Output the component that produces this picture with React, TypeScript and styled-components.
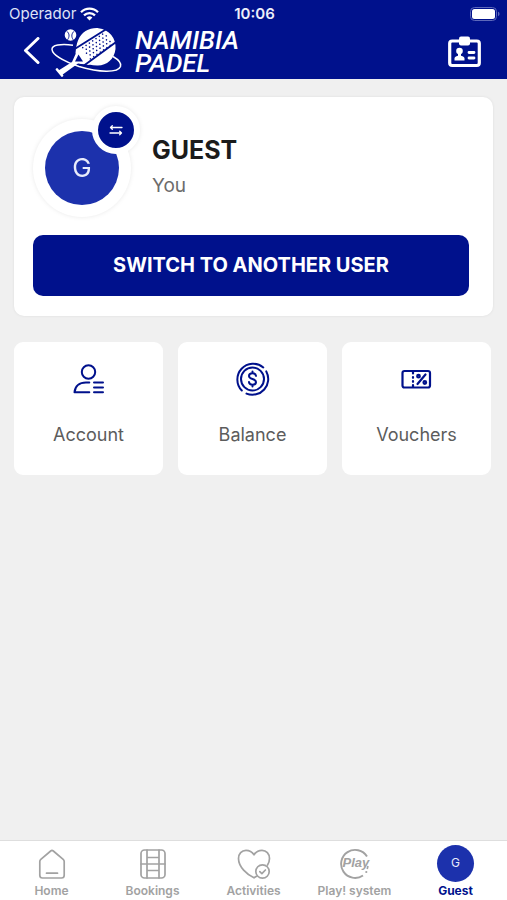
import React from "react";
import styled, { createGlobalStyle } from "styled-components";

const navy = "#00118c";
const royal = "#1c31ac";
const grey = "#a2a2a2";

const GlobalStyle = createGlobalStyle`
  *, *::before, *::after { box-sizing: border-box; }
  body { margin: 0; background: #f0f0f0; font-family: Inter, "Liberation Sans", sans-serif; }
  button { font: inherit; border: 0; padding: 0; cursor: pointer; }
  svg { display: block; flex: none; }
`;

const Screen = styled.div`
  min-height: 100vh;
  display: flex;
  flex-direction: column;
`;

const Header = styled.header`
  background: ${navy};
  color: #fff;
  padding-bottom: 2px;
`;

const StatusBar = styled.div`
  height: 27px;
  padding: 0 7px 0 9px;
  display: grid;
  grid-template-columns: 1fr auto 1fr;
  align-items: center;
`;

const Carrier = styled.span`
  display: flex;
  align-items: center;
  gap: 4px;
  font-size: 15px;
  line-height: 18px;
  color: #dfe2f6;
`;

const Clock = styled.time`
  font-size: 15px;
  line-height: 18px;
  font-weight: 600;
  color: #eceefa;
`;

const BatterySlot = styled.span`
  justify-self: end;
`;

const TitleBar = styled.div`
  height: 50px;
  padding: 0 26px 0 23px;
  display: flex;
  align-items: center;
`;

const IconButton = styled.button`
  background: none;
  color: inherit;
  display: flex;
`;

const Brand = styled.div`
  flex: 1;
  display: flex;
  align-items: center;
  gap: 12px;
  margin-left: 9px;
`;

const BrandName = styled.span`
  font-family: Roboto, "Liberation Sans", sans-serif;
  font-size: 26px;
  line-height: 23px;
  font-style: italic;
  font-weight: 500;
`;

const Main = styled.main`
  flex: 1;
  padding: 18px 14px;
  display: flex;
  flex-direction: column;
  gap: 26px;
`;

const ProfileCard = styled.section`
  background: #fff;
  border-radius: 10px;
  padding: 22px 24px 20px 19px;
  box-shadow: 0 0 3px rgba(0, 0, 0, 0.08);
`;

const Identity = styled.div`
  display: flex;
  align-items: center;
  gap: 21px;
  margin-bottom: 18px;
`;

const AvatarFrame = styled.div`
  position: relative;
  width: 98px;
  height: 98px;
  border-radius: 50%;
  background: #fff;
  display: grid;
  place-items: center;
  filter: drop-shadow(0 0 2px rgba(0, 0, 0, 0.09));
`;

const Avatar = styled.span<{ $size: number; $font: number }>`
  width: ${(p) => p.$size}px;
  height: ${(p) => p.$size}px;
  padding-bottom: 2px;
  border-radius: 50%;
  background: ${royal};
  color: #e8ebfb;
  display: grid;
  place-items: center;
  font-size: ${(p) => p.$font}px;
  font-weight: 400;
`;

const SwapBadge = styled.button`
  position: absolute;
  top: -13px;
  right: -9px;
  width: 48px;
  height: 48px;
  border-radius: 50%;
  border: 6px solid #fff;
  background: ${navy};
  color: #fff;
  display: grid;
  place-items: center;
`;

const Names = styled.div`
  display: flex;
  flex-direction: column;
  gap: 8px;
  padding-bottom: 2px;
`;

const UserName = styled.h1`
  margin: 0;
  font-size: 25px;
  line-height: 30px;
  font-weight: 700;
  color: #1b1b1b;
`;

const UserRole = styled.span`
  font-size: 19px;
  line-height: 26px;
  color: #6c6c6c;
`;

const SwitchButton = styled.button`
  width: 100%;
  height: 61px;
  padding-bottom: 2px;
  border-radius: 10px;
  background: ${navy};
  color: #fff;
  font-size: 20px;
  line-height: 24px;
  font-weight: 700;
`;

const Tiles = styled.nav`
  display: grid;
  grid-template-columns: repeat(3, 1fr);
  gap: 15px;
  padding-right: 2px;
`;

const Tile = styled.a`
  background: #fff;
  border-radius: 9px;
  padding: 19px 0 28px;
  display: flex;
  flex-direction: column;
  align-items: center;
  gap: 26px;
  color: #5c5c5c;
  font-size: 18px;
  line-height: 24px;
  text-decoration: none;
  svg { color: ${navy}; }
`;

const TabBar = styled.nav`
  position: sticky;
  bottom: 0;
  background: #fff;
  border-top: 1px solid #dedede;
  display: grid;
  grid-template-columns: repeat(5, 1fr);
  padding: 4px 1px 0;
`;

const Tab = styled.a<{ $active?: boolean }>`
  height: 55px;
  display: flex;
  flex-direction: column;
  align-items: center;
  gap: 1px;
  color: ${(p) => (p.$active ? navy : grey)};
  font-size: 12px;
  line-height: 16px;
  font-weight: ${(p) => (p.$active ? 700 : 600)};
  text-decoration: none;
  white-space: nowrap;
`;

const TabIcon = styled.span`
  height: 37px;
  display: grid;
  place-items: center;
`;

const stroke = {
  fill: "none",
  stroke: "currentColor",
  strokeLinecap: "round" as const,
  strokeLinejoin: "round" as const,
};

const Wifi = () => (
  <svg width="19" height="14" viewBox="0 0 19 14" fill="none" stroke="#fff" strokeWidth="2.3" aria-hidden="true">
    <path d="M1 5.2a12 12 0 0 1 17 0M4 8.400a7.800 7.800 0 0 1 11 0" />
    <path d="M9.500 13.500 6.600 10.600a4.100 4.100 0 0 1 5.800 0z" fill="#fff" stroke="none" />
  </svg>
);

const Battery = () => (
  <svg width="30" height="14" viewBox="0 0 30 14" aria-label="Battery full">
    <rect x="0.5" y="0.5" width="26" height="13" rx="4" fill="none" stroke="#5d68ba" />
    <rect x="2" y="2" width="23" height="10" rx="2.5" fill="#fff" />
    <path d="M28 4.8c2 .6 2 3.8 0 4.4z" fill="#5d68ba" />
  </svg>
);

const BackIcon = () => (
  <svg width="18" height="30" viewBox="0 0 18 30" {...stroke} strokeWidth="3" aria-hidden="true">
    <path d="M15 1.500 2.500 13.500l12.500 12" />
  </svg>
);

const dots: [number, number][] = [];
for (let r = -2; r <= 2; r++) {
  for (let c = -3; c <= 3; c++) dots.push([c * 4 + (r % 2 ? 2 : 0), r * 3.4]);
}

const RacketLogo = () => (
  <svg width="73" height="50" viewBox="0 0 73 50" aria-hidden="true">
    <circle cx="20.5" cy="8" r="5.8" fill="#fff" />
    <path d="M16.500 4c3 2.200 3.400 5.500 1 8.800M24.400 4c-2.900 2.100-3.400 5.500-1.200 8.800" fill="none" stroke={navy} strokeWidth="0.9" />
    <path d="M23 18.200C11 16.500 1.500 18 2 22.500C2.500 27.500 13 34 29 39.500C49 45.500 68 46 70.500 39.500C71.500 36.500 69 33 63 29.500" fill="none" stroke="#fff" strokeWidth="1.5" />
    <path d="M26.500 25 22 35 8.500 43.500l3.500 4.500L28 36.500 40 38z" fill="#fff" />
    <path d="M7 42.500l5 6" stroke="#fff" strokeWidth="2.600" strokeLinecap="round" />
    <path d="M25.500 26C26 21 26.500 17 28 13.500C31.500 4.500 40 .5 48.500 1.200C59 2.200 66.500 11.500 65.500 22C64.500 32.500 56 39 47 38.500C42 38.200 36 37 30 36.500z" fill="#fff" />
    <path d="M25.500 21.500 56.500 2M34 38.500 67.500 14" stroke={navy} strokeWidth="1.900" />
    <path d="M28.500 27.500 33 34.500 25 34.500z" fill={navy} />
    <g fill={navy} transform="translate(46.500 19.500) rotate(-34)">
      {dots.map(([x, y]) => (
        <circle key={`${x},${y}`} cx={x} cy={y} r="0.8" />
      ))}
    </g>
  </svg>
);

const IdCard = () => (
  <svg width="33" height="32" viewBox="0 0 33 32" aria-hidden="true">
    <rect x="1.7" y="5" width="29.6" height="24.5" rx="2.5" fill="none" stroke="#fff" strokeWidth="3.2" />
    <rect x="11" y="0.5" width="11" height="9" rx="2" fill="#fff" />
    <circle cx="11.5" cy="15" r="3.3" fill="#fff" />
    <path d="M6.500 24.500v-2.200c0-1.700 2.700-2.500 3.500-2.600V17h3v2.700c.8.100 3.500.9 3.500 2.600v2.200z" fill="#fff" />
    <path d="M21 16.500h5M21 22h5" stroke="#fff" strokeWidth="2.8" strokeLinecap="round" />
  </svg>
);

const SwapIcon = () => (
  <svg width="14" height="14" viewBox="0 0 14 14" {...stroke} strokeWidth="1.3" aria-hidden="true">
    <path d="M13 4.500H1.500M3.300 2.700 1.500 4.500l1.800 1.800M1 10h11.500M10.700 8.200 12.500 10l-1.800 1.800" />
  </svg>
);

const AccountIcon = () => (
  <svg width="36" height="36" viewBox="0 0 36 36" {...stroke} strokeWidth="2" aria-hidden="true">
    <circle cx="17.500" cy="11" r="6.700" />
    <path d="M18.300 21.500H15C8.500 21.500 4 25 3.500 31.300H18.300" />
    <path d="M23 21.500h9M23 26.500h9M23 31.300h9" />
  </svg>
);

const BalanceIcon = () => (
  <svg width="36" height="36" viewBox="0 0 36 36" {...stroke} strokeWidth="2" aria-hidden="true">
    <circle cx="17.500" cy="18" r="11.500" />
    <path d="M6.800 29.500A15.800 15.800 0 0 1 28.300 6.400M31.300 10.400A15.800 15.800 0 0 1 11.500 32.600" />
    <path d="M21 14.800c-.2-1.700-1.600-2.500-3.500-2.500s-3.500.9-3.500 2.700c0 4 7 2 7 6 0 1.800-1.600 2.700-3.500 2.700s-3.300-.9-3.500-2.600M17.500 10.500v1.800M17.500 23.700v1.800" />
  </svg>
);

const VoucherIcon = () => (
  <svg width="36" height="36" viewBox="0 0 36 36" {...stroke} strokeWidth="2.2" aria-hidden="true">
    <rect x="3.500" y="10" width="27.500" height="16.500" rx="2" />
    <path d="M14 10.500v2M14 16v.8M14 20v.8M14 24v2" />
    <path d="M26.500 13.500 18.500 23" />
    <circle cx="19.500" cy="15.200" r="1.300" />
    <circle cx="25.800" cy="21.500" r="1.300" />
  </svg>
);

const HomeIcon = () => (
  <svg width="30" height="32" viewBox="0 0 30 32" {...stroke} strokeWidth="1.7" aria-hidden="true">
    <path d="M2.800 13.500c0-1 .3-1.600 1-2.200L13.700 3c.8-.7 1.800-.7 2.600 0l9.900 8.300c.7.600 1 1.200 1 2.200v13.800c0 1.700-1 2.700-2.700 2.700h-19c-1.700 0-2.700-1-2.700-2.700zM9.500 25.200h11" />
  </svg>
);

const CourtIcon = () => (
  <svg width="30" height="32" viewBox="0 0 30 32" {...stroke} strokeWidth="1.7" aria-hidden="true">
    <rect x="3" y="2" width="24" height="28" rx="3.500" />
    <path d="M9 2v28M21 2v28M3 16h24M9 9.500h12M9 22.500h12" />
  </svg>
);

const HeartIcon = () => (
  <svg width="34" height="32" viewBox="0 0 34 32" {...stroke} strokeWidth="1.7" aria-hidden="true">
    <path d="M17 29.800C10 26.500 1.500 19 1.500 10.500 1.500 5.800 4.700 2.300 9 2.300c3.500 0 6.300 1.800 8 4.500 1.700-2.700 4.500-4.500 8-4.500 4.300 0 7.500 3.500 7.500 8.200 0 2.500-.7 4.500-2 6.500M17 29.800l2.500-1.500" />
    <circle cx="25.500" cy="23.500" r="6.700" />
    <path d="m22.800 23.600 2.100 2 3.500-3.600" />
  </svg>
);

const PlayLogo = styled.svg`
  font-family: "Liberation Sans", sans-serif;
  font-size: 13px;
  font-weight: 700;
  font-style: italic;
  fill: currentColor;
`;

const PlayIcon = () => (
  <PlayLogo width="32" height="32" viewBox="0 0 32 32">
    <path d="M28 8.500A14 14 0 1 0 24 27.500" fill="none" stroke="currentColor" strokeWidth="1.900" />
    <path d="M29 18l-.8 3" stroke="currentColor" strokeWidth="1.600" />
    <circle cx="27.300" cy="24" r="1.100" />
    <text x="3.500" y="18.500">Play</text>
  </PlayLogo>
);

const shortcuts = [
  { label: "Account", icon: <AccountIcon /> },
  { label: "Balance", icon: <BalanceIcon /> },
  { label: "Vouchers", icon: <VoucherIcon /> },
];

const tabs = [
  { label: "Home", icon: <HomeIcon /> },
  { label: "Bookings", icon: <CourtIcon /> },
  { label: "Activities", icon: <HeartIcon /> },
  { label: "Play! system", icon: <PlayIcon /> },
  { label: "Guest", icon: <Avatar $size={37} $font={12}>G</Avatar>, active: true },
];

export default function App() {
  return (
    <Screen>
      <GlobalStyle />
      <Header>
        <StatusBar>
          <Carrier>Operador <Wifi /></Carrier>
          <Clock>10:06</Clock>
          <BatterySlot><Battery /></BatterySlot>
        </StatusBar>
        <TitleBar>
          <IconButton type="button" aria-label="Back"><BackIcon /></IconButton>
          <Brand>
            <RacketLogo />
            <BrandName>NAMIBIA<br />PADEL</BrandName>
          </Brand>
          <IconButton type="button" aria-label="Member card"><IdCard /></IconButton>
        </TitleBar>
      </Header>
      <Main>
        <ProfileCard>
          <Identity>
            <AvatarFrame>
              <Avatar $size={74} $font={26}>G</Avatar>
              <SwapBadge type="button" aria-label="Swap user"><SwapIcon /></SwapBadge>
            </AvatarFrame>
            <Names>
              <UserName>GUEST</UserName>
              <UserRole>You</UserRole>
            </Names>
          </Identity>
          <SwitchButton type="button">SWITCH TO ANOTHER USER</SwitchButton>
        </ProfileCard>
        <Tiles aria-label="Shortcuts">
          {shortcuts.map((s) => (
            <Tile key={s.label} href={`#${s.label.toLowerCase()}`}>{s.icon}{s.label}</Tile>
          ))}
        </Tiles>
      </Main>
      <TabBar aria-label="Main">
        {tabs.map((t) => (
          <Tab key={t.label} href={`#${t.label.toLowerCase().replace(/\W+/g, "-")}`} $active={t.active}>
            <TabIcon>{t.icon}</TabIcon>
            {t.label}
          </Tab>
        ))}
      </TabBar>
    </Screen>
  );
}
